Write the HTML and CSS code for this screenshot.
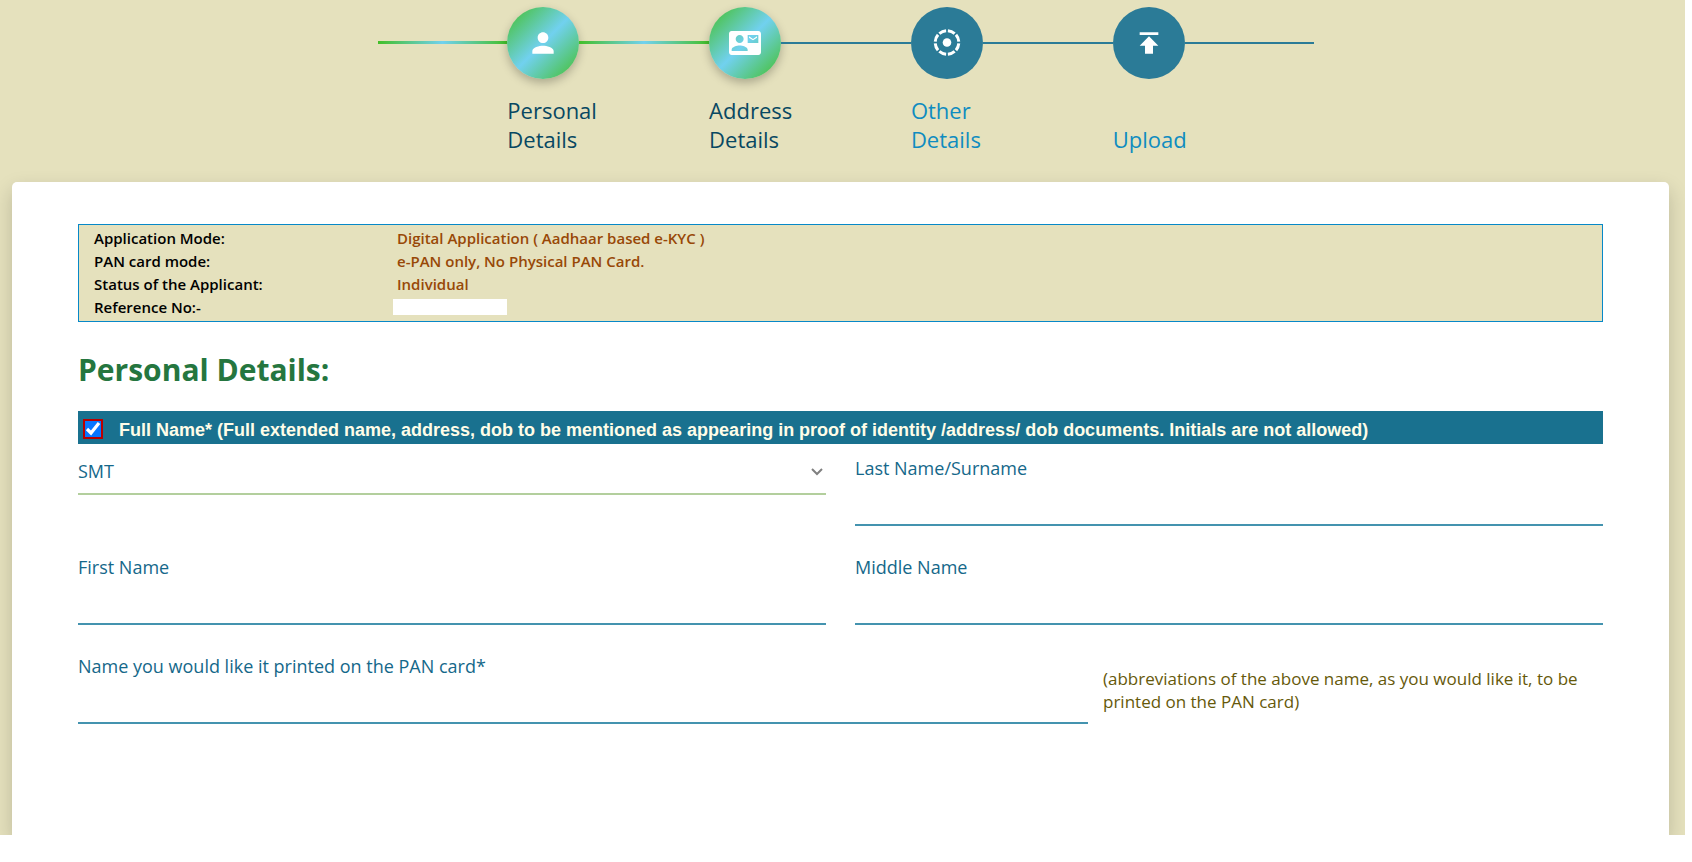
FILE: index.html
```html
<!DOCTYPE html>
<html lang="en">
<head>
<meta charset="utf-8">
<meta name="viewport" content="width=device-width, initial-scale=1">
<title>PAN Application - Personal Details</title>
<link rel="stylesheet" href="styles.css">
</head>
<body>
<div class="page">
  <nav class="stepper" aria-label="Application steps">
    <div class="rail done"></div>
    <div class="step active">
      <span class="badge"><svg viewBox="0 0 24 24" width="32" height="32"><path d="M12 12c2.21 0 4-1.79 4-4s-1.79-4-4-4-4 1.79-4 4 1.79 4 4 4zm0 2c-2.67 0-8 1.34-8 4v2h16v-2c0-2.66-5.33-4-8-4z"/></svg></span>
      <span class="step-label">Personal Details</span>
    </div>
    <div class="rail done"></div>
    <div class="step active">
      <span class="badge"><svg viewBox="0 0 24 24" width="32" height="32"><path d="M21 8V7l-3 2-3-2v1l3 2 3-2zm1-5H2C.9 3 0 3.900 0 5v14c0 1.100.9 2 2 2h20c1.100 0 1.990-.9 1.990-2L24 5c0-1.100-.9-2-2-2zM8 6c1.660 0 3 1.340 3 3s-1.340 3-3 3-3-1.340-3-3 1.340-3 3-3zm6 12H2v-1c0-2 4-3.100 6-3.100s6 1.100 6 3.100v1zm8-6h-8V6h8v6z"/></svg></span>
      <span class="step-label">Address Details</span>
    </div>
    <div class="rail"></div>
    <div class="step">
      <span class="badge"><svg viewBox="0 0 32 32" width="32" height="32"><circle cx="16" cy="15.500" r="4.300"/><circle class="ring" cx="16" cy="15.500" r="11.800" pathLength="80"/></svg></span>
      <span class="step-label">Other Details</span>
    </div>
    <div class="rail"></div>
    <div class="step">
      <span class="badge"><svg viewBox="0 0 24 24" width="32" height="32"><path d="M5 4v2h14V4H5zm0 10h4v6h6v-6h4l-7-7-7 7z"/></svg></span>
      <span class="step-label">Upload</span>
    </div>
    <div class="rail"></div>
  </nav>

  <main class="card">
    <dl class="summary">
      <dt>Application Mode:</dt><dd>Digital Application ( Aadhaar based e-KYC )</dd>
      <dt>PAN card mode:</dt><dd>e-PAN only, No Physical PAN Card.</dd>
      <dt>Status of the Applicant:</dt><dd>Individual</dd>
      <dt>Reference No:-</dt><dd><span class="redacted"></span></dd>
    </dl>

    <h1 class="title">Personal Details:</h1>

    <form>
      <div class="notice">
        <input class="tick" type="checkbox" id="confirm" checked>
        <label for="confirm">Full Name* (Full extended name, address, dob to be mentioned as appearing in proof of identity /address/ dob documents. Initials are not allowed)</label>
      </div>
      <div class="fields">
        <div class="select-field">
          <select aria-label="Title"><option>SMT</option><option>SHRI</option><option>KUMARI</option></select>
          <svg class="chevron" viewBox="0 0 12 8" width="12" height="8"><path d="M1 1l5 5 5-5"/></svg>
        </div>
        <div class="field"><label for="last">Last Name/Surname</label><input type="text" id="last"></div>
        <div class="field"><label for="first">First Name</label><input type="text" id="first"></div>
        <div class="field"><label for="middle">Middle Name</label><input type="text" id="middle"></div>
      </div>
      <div class="print-row">
        <div class="field"><label for="print">Name you would like it printed on the PAN card*</label><input type="text" id="print"></div>
        <p class="hint">(abbreviations of the above name, as you would like it, to be printed on the PAN card)</p>
      </div>
    </form>
  </main>
</div>
</body>
</html>
```
FILE: styles.css
```css
* { box-sizing: border-box; }
body {
  margin: 0;
  background: #fff;
  color: #15688a;
  font-family: "Open Sans", "Noto Sans", sans-serif;
}
.page {
  display: flex;
  flex-direction: column;
  min-height: calc(100vh - 27px);
  margin: 0 7px 27px 0;
  padding: 7px 16px 0 12px;
  background: #e5e1bd;
  overflow: hidden;
}
.stepper {
  display: flex;
  width: calc(56% + 20px);
  margin: 0 auto;
  padding-left: 11px;
}
.rail {
  flex: 1;
  height: 2px;
  margin-top: 35px;
  background: #2b7b97;
}
.rail.done {
  height: 3px;
  margin-top: 34px;
  background: linear-gradient(90deg, #43bf28, #71d1ef, #43bf28);
}
.step {
  display: flex;
  flex-direction: column;
  justify-content: space-between;
  width: 72px;
  height: 147px;
  color: #0f8cc0;
}
.step.active { color: #084862; }
.badge {
  display: flex;
  align-items: center;
  justify-content: center;
  width: 72px;
  height: 72px;
  border-radius: 50%;
  background: #2b7b97;
}
.active .badge {
  background: linear-gradient(135deg, #43bf28, #71d1ef 50%, #43bf28);
  box-shadow: 0 4px 10px rgba(0, 0, 0, 0.25);
}
.badge svg { fill: #fff; }
.badge .ring {
  fill: none;
  stroke: #fff;
  stroke-width: 3;
  stroke-dasharray: 8 2;
  stroke-dashoffset: -1;
}
.step-label {
  font-size: 22px;
  line-height: 29px;
  font-weight: 400;
}
.card {
  flex: 1;
  margin-top: 28px;
  padding: 42px 66px 0;
  border-radius: 5px 5px 0 0;
  background: #fff;
  box-shadow: 0 8px 20px rgba(0, 0, 0, 0.18);
}
.summary {
  display: grid;
  grid-template-columns: 303px 1fr;
  grid-auto-rows: 23px;
  margin: 0;
  padding: 2px 15px;
  border: 1px solid #0788c8;
  background: #e5e1bd;
  color: #000;
  font-size: 15px;
  line-height: 23px;
  font-weight: 600;
}
.summary dd { margin: 0; color: #984807; }
.redacted {
  display: block;
  width: 114px;
  height: 16px;
  margin: 3px 0 0 -4px;
  background: #fff;
}
.title {
  margin: 27px 0 21px;
  color: #25763f;
  font-size: 30px;
  line-height: 41px;
  font-weight: 700;
}
.notice {
  display: flex;
  align-items: center;
  gap: 16px;
  min-height: 33px;
  padding: 2px 5px 0;
  background: #19718f;
  color: #fffde8;
  font: bold 18px/24px "Liberation Sans", Arial, sans-serif;
}
.notice label { padding-top: 2px; }
.tick {
  flex: none;
  width: 20px;
  height: 20px;
  margin: 0;
  outline: 2px solid #b90000;
  outline-offset: -2px;
  border: 2px solid #b90000;
  accent-color: #0876ff;
}
.fields {
  display: grid;
  grid-template-columns: 1fr 1fr;
  gap: 29px;
  align-items: start;
  padding-top: 12px;
}
.field { display: flex; flex-direction: column; }
.field label {
  font-size: 18px;
  line-height: 25px;
}
.field input {
  width: 100%;
  height: 45px;
  padding: 0;
  border: 0;
  border-bottom: 2px solid #4493af;
  background: none;
  color: inherit;
  font: 18px/24px "Open Sans", sans-serif;
}
.select-field { position: relative; }
.select-field select {
  width: 100%;
  height: 39px;
  padding: 0 0 6px;
  appearance: none;
  border: 0;
  border-bottom: 2px solid #b3cf9d;
  border-radius: 0;
  background: none;
  color: #15688a;
  font: 18px/25px "Open Sans", sans-serif;
}
.chevron {
  position: absolute;
  top: 12px;
  right: 3px;
  fill: none;
  stroke: #808080;
  stroke-width: 2;
  pointer-events: none;
}
.print-row {
  display: grid;
  grid-template-columns: 101fr 50fr;
  gap: 15px;
  padding-top: 29px;
}
.hint {
  margin: 13px 0 0;
  color: #66590a;
  font-size: 17px;
  line-height: 23px;
}
input:focus, select:focus { outline-color: #19718f; }
```
